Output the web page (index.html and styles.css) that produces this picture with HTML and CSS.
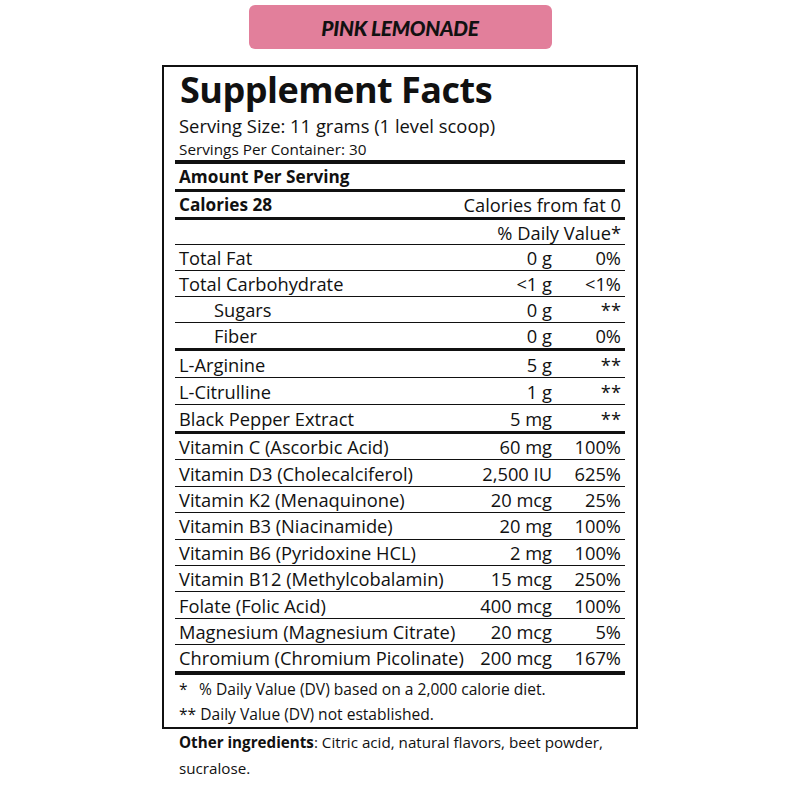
FILE: index.html
```html
<!DOCTYPE html>
<html lang="en">
<head>
    <meta charset="UTF-8">
    <meta name="viewport" content="width=device-width, initial-scale=1.0">
    <title>Pink Lemonade - Supplement Facts</title>
    <link rel="stylesheet" href="styles.css">
</head>
<body>

<div class="page">
    <div class="flavor">PINK LEMONADE</div>

    <div class="facts">
        <h1>Supplement Facts</h1>
        <p class="serving">Serving Size: 11 grams (1 level scoop)</p>
        <p class="servings">Servings Per Container: 30</p>

        <div class="row head bar-md"><b>Amount Per Serving</b></div>
        <div class="row head bar-md">
            <b>Calories 28</b>
            <span class="right">Calories from fat 0</span>
        </div>
        <div class="row dv-head"><span class="right">% Daily Value*</span></div>

        <!-- Macros -->
        <div class="row"><span>Total Fat</span><span class="amt">0 g</span><span class="dv">0%</span></div>
        <div class="row"><span>Total Carbohydrate</span><span class="amt">&lt;1 g</span><span class="dv">&lt;1%</span></div>
        <div class="row sub"><span>Sugars</span><span class="amt">0 g</span><span class="dv">**</span></div>
        <div class="row sub bar-md"><span>Fiber</span><span class="amt">0 g</span><span class="dv">0%</span></div>

        <!-- Actives -->
        <div class="row mid"><span>L-Arginine</span><span class="amt">5 g</span><span class="dv">**</span></div>
        <div class="row mid"><span>L-Citrulline</span><span class="amt">1 g</span><span class="dv">**</span></div>
        <div class="row mid bar-md"><span>Black Pepper Extract</span><span class="amt">5 mg</span><span class="dv">**</span></div>

        <!-- Vitamins & minerals -->
        <div class="row vit"><span>Vitamin C (Ascorbic Acid)</span><span class="amt">60 mg</span><span class="dv">100%</span></div>
        <div class="row vit"><span>Vitamin D3 (Cholecalciferol)</span><span class="amt">2,500 IU</span><span class="dv">625%</span></div>
        <div class="row vit"><span>Vitamin K2 (Menaquinone)</span><span class="amt">20 mcg</span><span class="dv">25%</span></div>
        <div class="row vit"><span>Vitamin B3 (Niacinamide)</span><span class="amt">20 mg</span><span class="dv">100%</span></div>
        <div class="row vit"><span>Vitamin B6 (Pyridoxine HCL)</span><span class="amt">2 mg</span><span class="dv">100%</span></div>
        <div class="row vit"><span>Vitamin B12 (Methylcobalamin)</span><span class="amt">15 mcg</span><span class="dv">250%</span></div>
        <div class="row vit"><span>Folate (Folic Acid)</span><span class="amt">400 mcg</span><span class="dv">100%</span></div>
        <div class="row vit"><span>Magnesium (Magnesium Citrate)</span><span class="amt">20 mcg</span><span class="dv">5%</span></div>
        <div class="row vit bar-lg"><span>Chromium (Chromium Picolinate)</span><span class="amt">200 mcg</span><span class="dv">167%</span></div>

        <div class="notes">
            <p><span class="mark">*</span>% Daily Value (DV) based on a 2,000 calorie diet.</p>
            <p>** Daily Value (DV) not established.</p>
        </div>
    </div>

    <div class="other">
        <p><b>Other ingredients</b>: Citric acid, natural flavors, beet powder,</p>
        <p>sucralose.</p>
    </div>
</div>

</body>
</html>
```

FILE: styles.css
```css
body {
    margin: 0;
    padding: 0;
    background-color: #fff;
    color: #111;
    font-family: "Open Sans", "Liberation Sans", sans-serif;
}
.page {
    width: 476px;
    margin: 0 auto;
    padding-top: 5px;
}
.flavor {
    width: 303px;
    height: 44px;
    margin: 0 auto;
    background-color: #e27f9b;
    border-radius: 6px;
    display: flex;
    align-items: center;
    justify-content: center;
    font-family: Lato, sans-serif;
    font-size: 20.8px;
    font-weight: 900;
    font-style: italic;
    letter-spacing: -0.3px;
}
.facts {
    margin-top: 16px;
    border: 2px solid #111;
    padding: 0 11px;
}
.facts h1 {
    margin: 0;
    height: 45px;
    padding-left: 5px;
    font-size: 36px;
    font-weight: 700;
    line-height: 46px;
    letter-spacing: -0.5px;
}
.serving {
    margin: 0;
    height: 27px;
    padding-left: 4px;
    font-size: 18.4px;
    line-height: 27px;
}
.servings {
    margin: 0;
    height: 21px;
    padding-left: 4px;
    font-size: 15.3px;
    line-height: 21px;
    border-bottom: 4px solid #111;
}
.row {
    display: grid;
    grid-template-columns: 1fr auto 69px;
    align-items: center;
    height: 25px;
    padding: 0 4px;
    border-bottom: 1px solid #111;
    font-size: 18.3px;
}
.row b {
    font-size: 17.2px;
}
.row.head {
    grid-template-columns: 1fr auto;
}
.row.dv-head {
    grid-template-columns: 1fr;
    height: 24px;
}
.row.mid {
    height: 26px;
}
.row.vit {
    height: 25.4px;
}
.row.sub span:first-child {
    padding-left: 35px;
}
.row.bar-md {
    border-bottom-width: 3px;
}
.row.bar-lg {
    border-bottom-width: 4px;
}
.right {
    text-align: right;
}
.amt {
    text-align: right;
}
.dv {
    text-align: right;
}
.notes {
    padding: 0 4px;
    font-size: 15.6px;
}
.notes p {
    margin: 0;
    height: 26px;
    line-height: 26px;
}
.notes p:first-child {
    line-height: 28px;
    overflow: hidden;
}
.mark {
    display: inline-block;
    width: 20px;
}
.other {
    padding: 0 17px;
    font-size: 15.2px;
}
.other p {
    margin: 0;
    height: 26px;
    line-height: 26px;
}
```
